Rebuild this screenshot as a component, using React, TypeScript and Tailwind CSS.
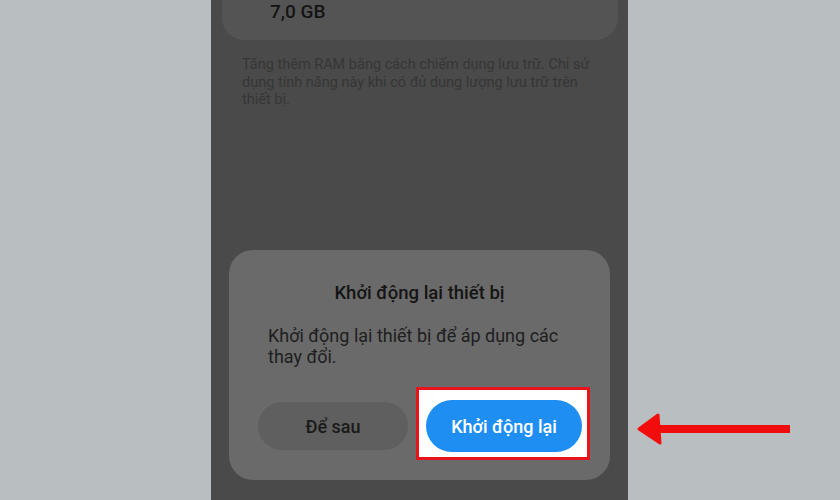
import React from "react";

export default function App() {
  return (
    <div
      className="relative flex h-[500px] w-[840px] overflow-hidden bg-[#b9bfc1]"
      style={{ fontFamily: "Roboto, 'Noto Sans', sans-serif" }}
    >
      <div className="ml-[211px] flex h-full w-[417px] flex-col bg-[#4a4a4a]">
        <div className="ml-[11px] mr-[10px] h-[40px] rounded-b-[22px] bg-[#545454] pl-[48px]">
          <div className="text-[19px] font-medium leading-6 text-[#141414]">7,0 GB</div>
        </div>
        <p className="mt-[16px] pl-[31px] pr-[30px] text-[14.5px] leading-[17.5px] text-[#363636]">
          Tăng thêm RAM bằng cách chiếm dụng lưu trữ. Chỉ sử dụng tính năng này khi có đủ dung lượng lưu trữ trên thiết bị.
        </p>
        <div className="mt-auto mb-[20px] ml-[18px] mr-[18px] rounded-[24px] bg-[#6a6a6a] pt-[31px] pb-[20px]">
          <div className="text-center text-[18.5px] font-medium leading-6 text-[#151515]">
            Khởi động lại thiết bị
          </div>
          <p className="mt-[20px] pl-[39px] pr-[30px] text-[18px] leading-[21px] text-[#1e1e1e]">
            Khởi động lại thiết bị để áp dụng các thay đổi.
          </p>
          <div className="mt-[20px] flex items-start pl-[29px]">
            <div className="mt-[15px] flex h-[48px] w-[150px] items-center justify-center rounded-full bg-[#5f5f5f] text-[18px] font-medium text-[#1a1a1a]">
              Để sau
            </div>
            <div className="ml-[8px] border-[3px] border-[#e8141c] bg-white pl-[7px] pr-[5px] pt-[10px] pb-[5px]">
              <div className="flex h-[52px] w-[156px] items-center justify-center rounded-full bg-[#1f8ef2] text-[18px] font-medium text-white">
                Khởi động lại
              </div>
            </div>
          </div>
        </div>
      </div>
      <svg
        className="absolute left-[636px] top-[412px]"
        width="156"
        height="34"
        viewBox="0 0 156 34"
      >
        <rect x="18" y="13" width="136" height="8" fill="#f20d0d" />
        <path d="M3 17 L22 3 L24 31 Z" fill="#f20d0d" stroke="#f20d0d" strokeWidth="3" strokeLinejoin="round" />
      </svg>
    </div>
  );
}
